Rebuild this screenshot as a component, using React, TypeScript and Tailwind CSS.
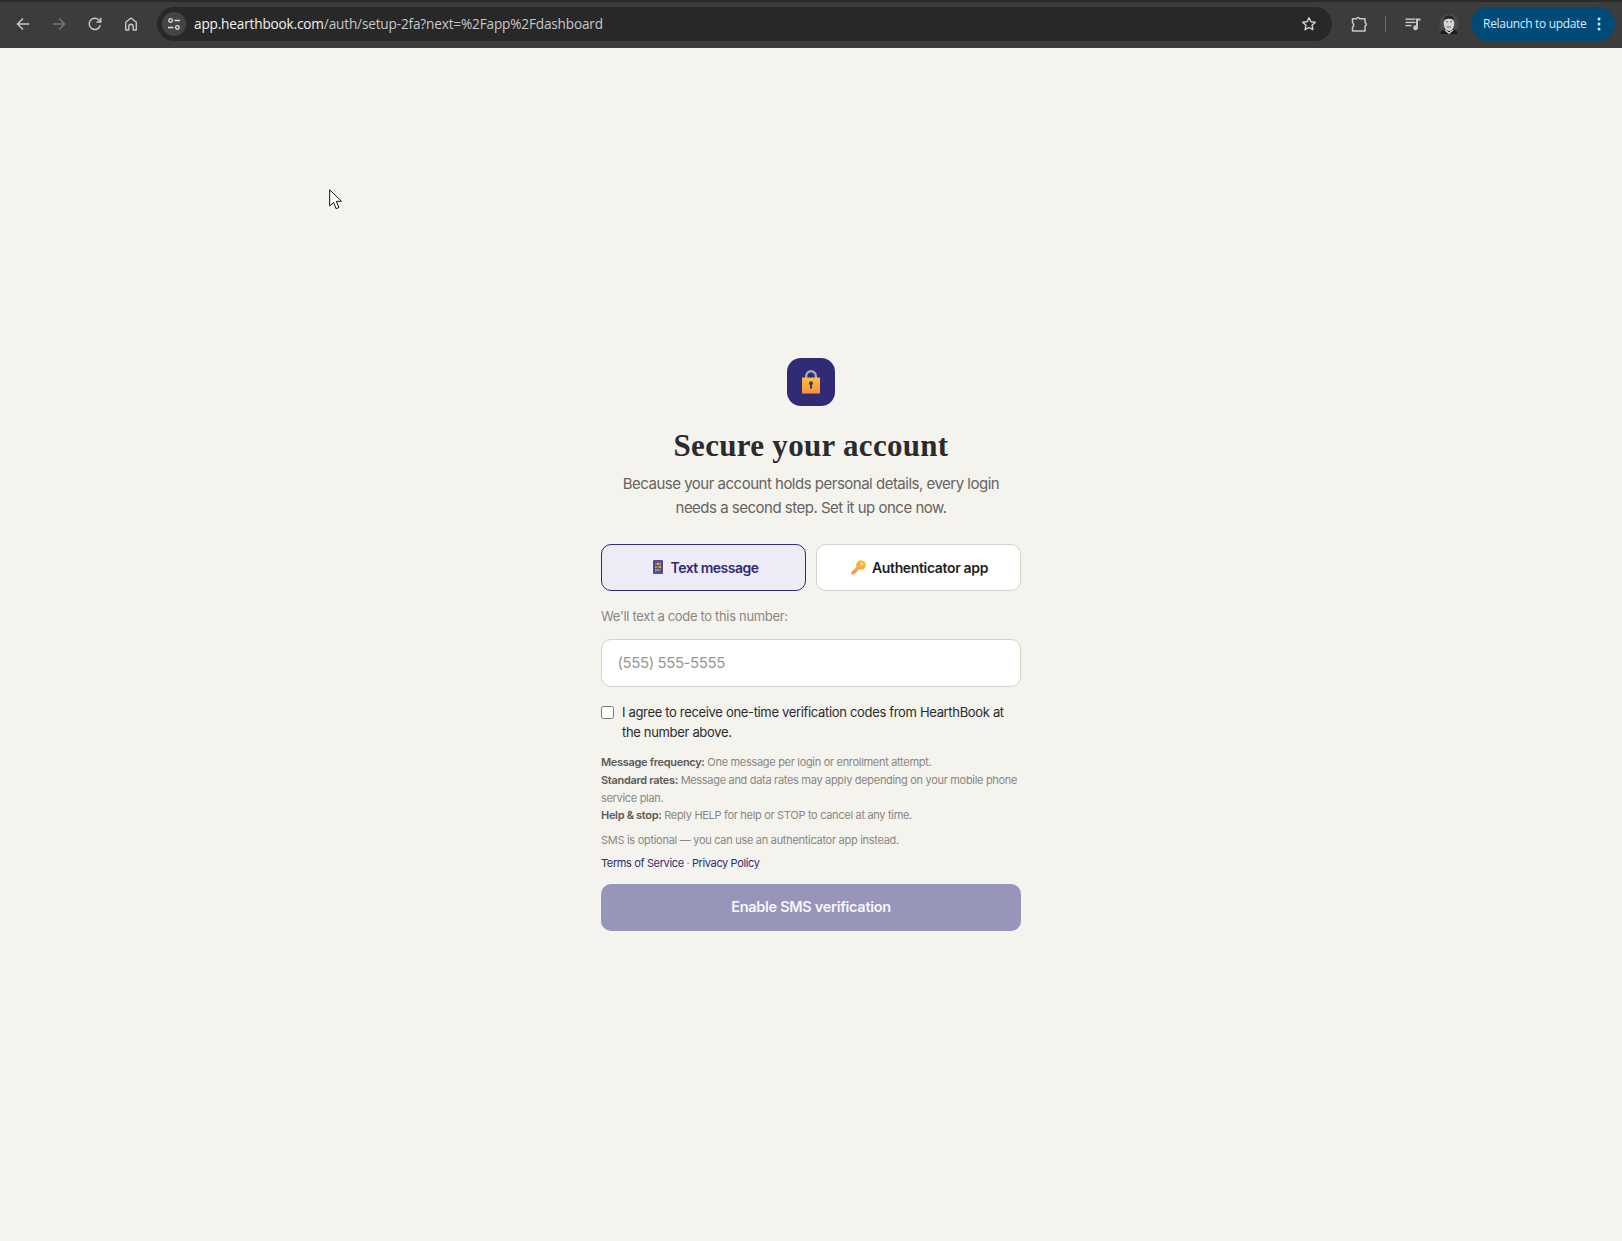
import React from "react";

const Back = () => (
  <svg width="16" height="16" viewBox="0 0 16 16" fill="none" stroke="#c7c7c7" strokeWidth="1.5"><path d="M14 8H2.500M8 2.500 2.500 8 8 13.500" /></svg>
);
const Forward = () => (
  <svg width="16" height="16" viewBox="0 0 16 16" fill="none" stroke="#757575" strokeWidth="1.5"><path d="M2 8h11.500M8 2.500 13.500 8 8 13.500" /></svg>
);
const Reload = () => (
  <svg width="16" height="16" viewBox="0 0 16 16" fill="none" stroke="#c7c7c7" strokeWidth="1.500"><path d="M13.300 9.300A5.600 5.600 0 1 1 11.900 4L13.500 5.600" /><path d="M13.800 1.800v4.300H9.500" /></svg>
);
const Home = () => (
  <svg width="16" height="16" viewBox="0 0 16 16" fill="none" stroke="#c7c7c7" strokeWidth="1.400"><path d="M2.700 14V6.300L8 2l5.300 4.300V14h-3.100v-3.600a2.200 2.200 0 0 0-4.400 0V14z" strokeLinejoin="round" /></svg>
);
const Tune = () => (
  <svg width="16" height="16" viewBox="0 0 16 16" fill="none" stroke="#e3e3e3" strokeWidth="1.300"><circle cx="4.600" cy="4.500" r="1.800" /><path d="M8.500 4.500H14M2 11.500h5.500" /><circle cx="11.400" cy="11.500" r="1.800" /></svg>
);
const Star = () => (
  <svg width="16" height="16" viewBox="0 0 16 16" fill="none" stroke="#d4d4d4" strokeWidth="1.400" strokeLinejoin="round"><path d="m8 1.800 1.900 4 4.400.5-3.200 3 .8 4.400L8 11.500l-3.900 2.200.8-4.400-3.200-3 4.400-.5z" /></svg>
);
const Puzzle = () => (
  <svg width="18" height="18" viewBox="0 0 18 18" fill="none" stroke="#c7c7c7" strokeWidth="1.500" strokeLinejoin="round"><path d="M2.500 3.700h4a1.600 1.600 0 0 1 3.100 0h5.400V7.800a1.700 1.700 0 0 1 0 3.300v5H2.500v-3.600q2.400-2.500 0-5z" /></svg>
);
const Media = () => (
  <svg width="16" height="16" viewBox="0 0 16 16" fill="#c7c7c7"><rect x="0.500" y="2.500" width="10" height="1.400" /><rect x="0.500" y="5.700" width="10" height="1.400" /><rect x="0.500" y="8.900" width="6" height="1.400" /><path d="M11 2.500h4.500v2H13v7.200a2.400 2.400 0 1 1-2-2.300z" /></svg>
);
const Avatar = () => (
  <svg width="20" height="20" viewBox="0 0 20 20">
    <circle cx="10" cy="10" r="10" fill="#4a4a4a" />
    <path d="M1.500 20c.5-3.500 3-4.500 4.500-5l4 2 4-2c1.500.5 4 1.500 4.500 5z" fill="#1c1c1c" />
    <ellipse cx="10" cy="9.500" rx="5.300" ry="7.500" fill="#d6d6d6" />
    <path d="M4.700 8C4.500 3.500 7 1.500 10 1.500s5.500 2 5.300 6.500c-.8-2-1.800-3.200-5.300-3.200S5.500 6 4.700 8z" fill="#242424" />
    <path d="M7 7.800h2M11 7.800h2M8 13h4" stroke="#5a5a5a" strokeWidth="0.900" />
    <path d="M6 15.500 10 18.500l4-3 .6.800L10 20l-4.600-3.700z" fill="#f4f4f4" />
  </svg>
);

const LockEmoji = () => (
  <svg width="20" height="24" viewBox="0 0 20 24">
    <defs>
      <linearGradient id="lockBody" x1="0" y1="0" x2="0" y2="1">
        <stop offset="0" stopColor="#fbc23a" />
        <stop offset="1" stopColor="#fd8f42" />
      </linearGradient>
    </defs>
    <path d="M5.200 9V6a4.800 4.800 0 0 1 9.600 0v3" fill="none" stroke="#a9a7c0" strokeWidth="2.400" />
    <rect x="1" y="7.500" width="18" height="16" rx="0.500" fill="url(#lockBody)" />
    <circle cx="10" cy="13.300" r="2" fill="#3f3a6e" />
    <rect x="9" y="13.300" width="2" height="5.500" rx="0.800" fill="#3f3a6e" />
  </svg>
);
const PhoneEmoji = () => (
  <svg width="10" height="14" viewBox="0 0 10 14">
    <rect width="10" height="14" rx="1" fill="#5c4a94" />
    <rect x="1.500" y="2" width="7" height="10" fill="#3a3170" />
    <rect x="2" y="2.500" width="1.800" height="2.600" fill="#e2574c" />
    <rect x="4.100" y="2.500" width="1.800" height="2.600" fill="#f5b335" />
    <rect x="6.200" y="2.500" width="1.800" height="2.600" fill="#4fb3e8" />
    <rect x="2" y="5.700" width="1.800" height="2.600" fill="#5cc06c" />
    <rect x="4.100" y="5.700" width="1.800" height="2.600" fill="#e2574c" />
    <rect x="6.200" y="5.700" width="1.800" height="2.600" fill="#f5b335" />
    <rect x="2" y="8.900" width="1.800" height="2.600" fill="#4fb3e8" />
    <rect x="4.100" y="8.900" width="1.800" height="2.600" fill="#5cc06c" />
    <rect x="6.200" y="8.900" width="1.800" height="2.600" fill="#e2574c" />
  </svg>
);
const KeyEmoji = () => (
  <svg width="15" height="15" viewBox="0 0 15 15">
    <defs>
      <linearGradient id="keyGrad" x1="1" y1="0" x2="0" y2="1">
        <stop offset="0" stopColor="#fcc53a" />
        <stop offset="1" stopColor="#f98a4c" />
      </linearGradient>
    </defs>
    <path d="M10 0.200a4.800 4.800 0 1 1-1.900 9.200L3.800 13.700l-.9-.2-.3.900-1.300.4L.3 13.800l.3-1.700L5.600 7A4.800 4.800 0 0 1 10 .2z" fill="url(#keyGrad)" />
    <circle cx="10.700" cy="3.900" r="1.200" fill="#fde9a8" />
  </svg>
);

const Cursor = () => (
  <svg width="13" height="21" viewBox="0 0 13 21" className="absolute left-[329px] top-[189px]">
    <path d="M.700.800V17l3.900-3.600 2.500 6.300 2.800-1.200-2.600-6.100 5.200-.2z" fill="#fff" stroke="#111" strokeWidth="1" strokeLinejoin="round" />
  </svg>
);

export default function App() {
  return (
    <div className="relative min-h-[1241px] bg-[#f4f3ee] font-['Inter',sans-serif]">
      <header className="flex h-[48px] items-center bg-[#3c3c3c] pl-[15px] pr-[7px] shadow-[inset_0_2px_0_#2a2a2a]">
        <div className="flex items-center gap-[20px]">
          <Back />
          <Forward />
          <Reload />
          <Home />
        </div>
        <div className="ml-[18px] flex h-[34px] w-[1176px] items-center rounded-full bg-[#282828] pl-[5px] pr-[15px]">
          <div className="flex h-[24px] w-[24px] items-center justify-center rounded-full bg-[#444444]">
            <Tune />
          </div>
          <div className="ml-[8px] flex-1 font-['Open_Sans',sans-serif] text-[13.600px] tracking-[-0.160px] text-[#c7c7c7]">
            <span className="text-[#f1f1f1]">app.hearthbook.com</span>/auth/setup-2fa?next=%2Fapp%2Fdashboard
          </div>
          <Star />
        </div>
        <div className="ml-[18px]"><Puzzle /></div>
        <div className="ml-[17px] h-[16px] w-px bg-[#6a6a6a]" />
        <div className="ml-[19px]"><Media /></div>
        <div className="ml-[18px]"><Avatar /></div>
        <div className="ml-[12px] flex h-[34px] w-[144px] items-center rounded-full bg-[#004a77] pl-[12px]">
          <span className="font-['Open_Sans',sans-serif] text-[12px] tracking-[-0.320px] text-[#d6ecff]">Relaunch to update</span>
          <svg width="4" height="14" viewBox="0 0 4 14" fill="#c2e7ff" className="ml-[11px]"><circle cx="2" cy="2" r="1.500" /><circle cx="2" cy="7" r="1.500" /><circle cx="2" cy="12" r="1.500" /></svg>
        </div>
      </header>

      <main className="mx-auto flex w-[420px] flex-col pt-[310px]">
        <div className="mx-auto flex h-[48px] w-[48px] items-center justify-center rounded-[14px] bg-[#312a74]">
          <LockEmoji />
        </div>
        <h1 className="mt-[23px] text-center font-['Liberation_Serif',serif] text-[31px] font-bold leading-[34px] tracking-[0.300px] text-[#2b2b2b]">
          Secure your account
        </h1>
        <p className="mt-[9px] text-center text-[15px] leading-[24px] tracking-[-0.500px] text-[#66635e]">
          Because your account holds personal details, every login
          <br />
          needs a second step. Set it up once now.
        </p>

        <div className="mt-[24px] grid grid-cols-2 gap-[10px]">
          <button className="flex h-[47px] items-center justify-center gap-[8px] rounded-[10px] border border-[#312a74] bg-[#edebf5] pb-[1px] pl-[4px] text-[14px] font-semibold tracking-[-0.530px] text-[#312a74]">
            <PhoneEmoji />
            Text message
          </button>
          <button className="flex h-[47px] items-center justify-center gap-[6px] rounded-[10px] border border-[#d6d2c9] bg-white pb-[1px] pl-[2px] text-[14px] font-semibold tracking-[-0.350px] text-[#1f1f1f]">
            <KeyEmoji />
            Authenticator app
          </button>
        </div>

        <label className="mt-[16px] text-[13px] leading-[18px] tracking-[-0.330px] text-[#8a8780]">We'll text a code to this number:</label>
        <input
          placeholder="(555) 555-5555"
          className="mt-[14px] h-[48px] w-full rounded-[10px] border border-[#d6d2c9] bg-white px-[15.500px] pb-[1px] text-[15px] tracking-[-0.420px] outline-none placeholder:text-[#9a9791]"
        />

        <div className="mt-[16px] flex items-start gap-[8px]">
          <input type="checkbox" className="mt-[3px] h-[13px] w-[13px] shrink-0 appearance-none rounded-[2.500px] border border-[#767676] bg-white" />
          <p className="text-[13px] leading-[19.500px] tracking-[-0.330px] text-[#2b2b2b]">
            I agree to receive one-time verification codes from HearthBook at the number above.
          </p>
        </div>

        <div className="mt-[12px] text-[11px] leading-[17.800px] tracking-[-0.310px] text-[#8a8780]">
          <p><strong className="font-semibold text-[#5c5a55]">Message frequency:</strong> One message per login or enrollment attempt.</p>
          <p><strong className="font-semibold text-[#5c5a55]">Standard rates:</strong> Message and data rates may apply depending on your mobile phone service plan.</p>
          <p><strong className="font-semibold text-[#5c5a55]">Help &amp; stop:</strong> Reply HELP for help or STOP to cancel at any time.</p>
        </div>
        <p className="mt-[5.500px] text-[11px] leading-[18px] tracking-[-0.290px] text-[#8a8780]">SMS is optional — you can use an authenticator app instead.</p>
        <p className="mt-[5px] text-[11px] leading-[18px] tracking-[-0.370px] text-[#8a8780]">
          <a className="text-[#312a74]">Terms of Service</a> · <a className="text-[#312a74]">Privacy Policy</a>
        </p>

        <button className="mt-[12.500px] h-[47px] w-full rounded-[10px] bg-[#9895ba] pb-[1px] text-[14.500px] font-semibold tracking-[-0.300px] text-[#f7f6fb]">
          Enable SMS verification
        </button>
      </main>
      <Cursor />
    </div>
  );
}
